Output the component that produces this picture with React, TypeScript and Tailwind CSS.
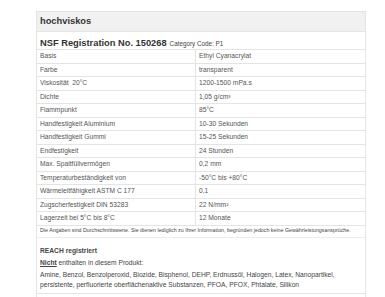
const rows = [
  ["Basis", "Ethyl Cyanacrylat"],
  ["Farbe", "transparent"],
  ["Viskosität  20°C", "1200-1500 mPa.s"],
  ["Dichte", "1,05 g/cm³"],
  ["Flammpunkt", "85°C"],
  ["Handfestigkeit Aluminium", "10-30 Sekunden"],
  ["Handfestigkeit Gummi", "15-25 Sekunden"],
  ["Endfestigkeit", "24 Stunden"],
  ["Max. Spaltfüllvermögen", "0,2 mm"],
  ["Temperaturbeständigkeit von", "-50°C bis +80°C"],
  ["Wärmeleitfähigkeit ASTM C 177", "0,1"],
  ["Zugscherfestigkeit DIN 53283", "22 N/mm²"],
  ["Lagerzeit bei 5°C bis 8°C", "12 Monate"],
]

export default function App() {
  return (
    <div className="min-h-[297px] bg-white pt-[11px] pl-[36px] font-['Liberation_Sans',Arial,sans-serif]">
      <div className="w-[330px] border-x border-[#e4e4e4]">
        {/* Header */}
        <div className="h-[20px] flex items-center px-[3px] bg-[#f1f1f1] border-t border-[#e4e4e4] text-[9.3px] font-bold text-[#333]">
          hochviskos
        </div>

        {/* Title */}
        <div className="h-[19px] flex items-baseline pt-[5px] px-[3px] border-t border-b border-[#e4e4e4] text-[#333]">
          <span className="text-[9.3px] font-bold">NSF Registration No. 150268</span>
          <span className="ml-[3px] text-[6.3px] text-[#444]">Category Code: P1</span>
        </div>

        {/* Table */}
        <div className="text-[6.7px] text-[#555]">
          {rows.map(([label, value], i) => (
            <div key={i} className="grid grid-cols-[159px_1fr] h-[13.5px] border-b border-[#e4e4e4]">
              <div className="flex items-center pl-[3px] border-r border-[#e4e4e4] whitespace-pre">{label}</div>
              <div className="flex items-center pl-[3px]">{value}</div>
            </div>
          ))}
          <div className="h-[12.5px] flex items-center pl-[3px] border-b border-[#ececec] text-[5.3px] text-[#444]">
            Die Angaben sind Durchschnittswerte. Sie dienen lediglich zu Ihrer Information, begründen jedoch keine Gewährleistungsansprüche.
          </div>
        </div>

        {/* REACH */}
        <div className="px-[3px] pt-[8px] pb-[4px] border-b border-[#e4e4e4] text-[6.7px] text-[#444]">
          <div className="font-bold leading-[9px] mb-[3px]">REACH registriert</div>
          <div className="leading-[9px] mb-[3px]">
            <span className="font-bold underline">Nicht</span> enthalten in diesem Produkt:
          </div>
          <div className="leading-[9.5px]">
            Amine, Benzol, Benzolperoxid, Biozide, Bisphenol, DEHP, Erdnussöl, Halogen, Latex, Nanopartikel,
            persistente, perfluorierte oberflächenaktive Substanzen, PFOA, PFOX, Phtalate, Silikon
          </div>
        </div>
        <div className="h-[8px]" />
      </div>
    </div>
  )
}
